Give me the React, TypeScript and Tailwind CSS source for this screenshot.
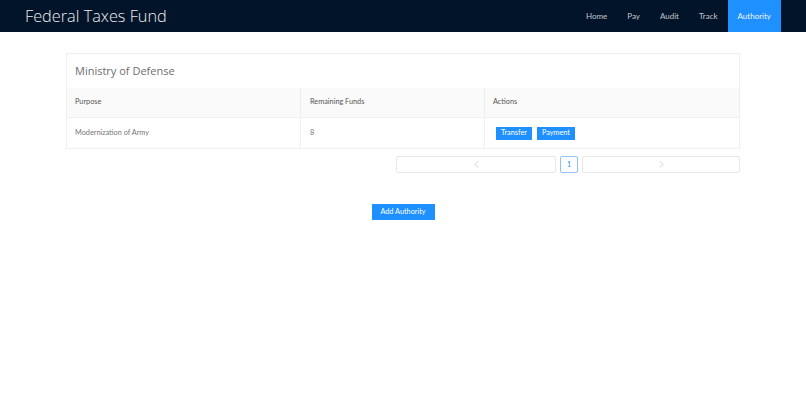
import React from "react";

const Chev = ({ dir }: { dir: "l" | "r" }) => (
  <svg width="5" height="7" viewBox="0 0 5 7" fill="none" stroke="#c4c4c4" strokeWidth="0.8">
    {dir === "l" ? <path d="M4 0.5 L1 3.5 L4 6.5" /> : <path d="M1 0.5 L4 3.5 L1 6.5" />}
  </svg>
);

export default function App() {
  return (
    <div className="min-h-[395px] w-full bg-white" style={{ fontFamily: "Lato, 'Open Sans', sans-serif" }}>
      <nav className="flex h-[32px] items-stretch bg-[#02142a]">
        <div className="flex items-center pl-[25px] text-[16.3px] font-light text-[#ececec]" style={{ fontFamily: "'Open Sans', Lato, sans-serif" }}>
          Federal Taxes Fund
        </div>
        <div className="ml-auto mr-[25px] flex items-stretch text-[8px] text-[#c2c6cc]">
          <div className="flex items-center px-[10px]">Home</div>
          <div className="flex items-center px-[10px]">Pay</div>
          <div className="flex items-center px-[10px]">Audit</div>
          <div className="flex items-center px-[10px]">Track</div>
          <div className="flex items-center bg-[#1e90ff] px-[10px] text-[#f0f6ff]">Authority</div>
        </div>
      </nav>

      <div className="mx-[66px] mt-[21px]">
        <div className="border border-[#f0f0f0]">
          <div className="flex h-[34px] items-center px-[8px] text-[11px] text-[#6e6e6e]" style={{ fontFamily: "'Open Sans', Lato, sans-serif" }}>Ministry of Defense</div>
          <div className="grid grid-cols-[234px_184px_1fr] bg-[#fafafa] text-[7.3px] text-[#555]">
            <div className="flex h-[29px] items-center border-r border-[#eee] px-[8px]">Purpose</div>
            <div className="flex h-[29px] items-center border-r border-[#eee] px-[9px]">Remaining Funds</div>
            <div className="flex h-[29px] items-center px-[8px]">Actions</div>
          </div>
          <div className="grid grid-cols-[234px_184px_1fr] border-t border-[#f0f0f0] text-[7.3px] text-[#777]">
            <div className="flex h-[30px] items-center border-r border-[#f0f0f0] px-[8px]">Modernization of Army</div>
            <div className="flex h-[30px] items-center border-r border-[#f0f0f0] px-[9px]">8</div>
            <div className="flex h-[30px] items-center gap-[5px] px-[11px]">
              <span className="flex h-[13px] items-center bg-[#1e90ff] px-[5px] text-white">Transfer</span>
              <span className="flex h-[13px] items-center bg-[#1e90ff] px-[5px] text-white">Payment</span>
            </div>
          </div>
        </div>

        <div className="mt-[7px] flex justify-end gap-[4px] text-[7px] text-[#999]">
          <div className="flex h-[17px] w-[160px] items-center justify-center rounded-[2px] border border-[#e8e8e8]"><Chev dir="l" /></div>
          <div className="flex h-[17px] w-[18px] items-center justify-center rounded-[2px] border border-[#8ec1f5] text-[#1e90ff]">1</div>
          <div className="flex h-[17px] w-[158px] items-center justify-center rounded-[2px] border border-[#e8e8e8]"><Chev dir="r" /></div>
        </div>

        <div className="mt-[31px] flex justify-center">
          <div className="flex h-[16px] w-[63px] items-center justify-center bg-[#1e90ff] text-[7.3px] text-white">Add Authority</div>
        </div>
      </div>
    </div>
  );
}
